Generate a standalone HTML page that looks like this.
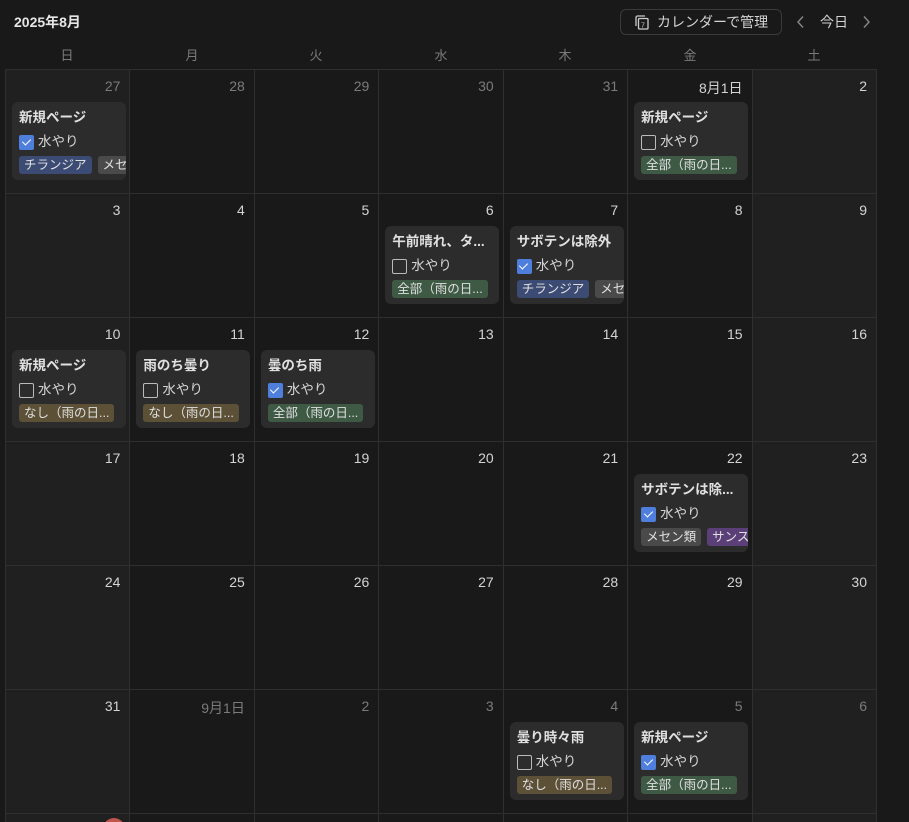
<!DOCTYPE html>
<html><head><meta charset="utf-8"><style>
*{box-sizing:border-box;margin:0;padding:0}
html,body{width:909px;height:822px;overflow:hidden}
body{background:#191919;font-family:"Liberation Sans","Noto Sans CJK JP",sans-serif;color:#d4d4d4;position:relative}
.title{position:absolute;left:14px;top:12px;font-size:14px;font-weight:bold;color:#e6e6e6}
.btn{position:absolute;left:620px;top:9px;width:162px;height:26px;border:1px solid #3a3a3a;border-radius:6px;font-size:14px;color:#d4d4d4;line-height:24px;padding-left:36px}
.nav{position:absolute;top:12px;font-size:14px;color:#d4d4d4}
.dn{position:absolute;top:45px;font-size:13px;color:#7a7a7a;width:124px;text-align:center}
.wrap{position:absolute;left:5px;top:69px;width:872px;height:753px;overflow:hidden}
.grid{width:872px;display:grid;grid-template-columns:repeat(7,1fr);grid-auto-rows:124px;border-left:1px solid #2f2f2f;border-top:1px solid #2f2f2f}
.c{position:relative;border-right:1px solid #2f2f2f;border-bottom:1px solid #2f2f2f}
.w{background:#202020}
.d{position:absolute;right:9px;top:8px;font-size:14px;color:#d4d4d4}
.o{color:#7b7b7b}
.card{position:absolute;left:6px;top:32px;width:114px;height:78px;background:#2c2c2c;border-radius:6px;overflow:hidden}
.t{position:absolute;left:7px;top:4px;font-size:13.5px;font-weight:bold;color:#e0e0e0;white-space:nowrap}
.cb{position:absolute;left:7px;top:32px;font-size:13.5px;color:#d4d4d4;padding-left:19px;line-height:16px;white-space:nowrap}
.cb:before{content:"";position:absolute;left:0;top:1px;width:13px;height:13px;border:1.5px solid #bbb;border-radius:2px}
.cb.k:before{background:#4f7fdc;border-color:#4f7fdc}
.cb.k:after{content:"";position:absolute;left:4.5px;top:3px;width:4px;height:7px;border:solid #fff;border-width:0 1.5px 1.5px 0;transform:rotate(45deg)}
.tags{position:absolute;left:7px;top:54px;white-space:nowrap;font-size:12.5px}
.tg{display:inline-block;height:18px;line-height:18px;padding:0 5px;border-radius:3px;margin-right:6px;color:#e0e0e0;vertical-align:top}
.b{background:#3b4b73}.g{background:#4a4a4a}.gr{background:#3e5a45}.y{background:#5c5037}.p{background:#5b3f78}
</style></head><body>
<div class="title">2025年8月</div>
<div class="btn"><svg style="position:absolute;left:14px;top:5px" width="14" height="15" viewBox="0 0 14 15"><path d="M1 11V2.5A1.5 1.5 0 0 1 2.5 1H10" fill="none" stroke="#ccc" stroke-width="1.3"/><rect x="3.5" y="3.5" width="9.5" height="10.5" rx="1" fill="none" stroke="#ccc" stroke-width="1.3"/><text x="6" y="12.5" font-size="7" fill="#ccc" font-family="Liberation Sans">7</text></svg>カレンダーで管理</div>
<svg class="nav" style="left:796px;top:15px" width="10" height="14" viewBox="0 0 10 14"><path d="M7 1.5L2 7l5 5.5" fill="none" stroke="#888" stroke-width="1.4"/></svg>
<div class="nav" style="left:820px">今日</div>
<svg class="nav" style="left:861px;top:15px" width="10" height="14" viewBox="0 0 10 14"><path d="M3 1.5L8 7l-5 5.5" fill="none" stroke="#888" stroke-width="1.4"/></svg>
<div class="dn" style="left:5px">日</div><div class="dn" style="left:130px">月</div><div class="dn" style="left:254px">火</div><div class="dn" style="left:379px">水</div><div class="dn" style="left:503px">木</div><div class="dn" style="left:628px">金</div><div class="dn" style="left:752px">土</div>
<div class="wrap"><div class="grid">
<div class="c w"><span class="d o">27</span><div class="card"><div class="t">新規ページ</div><div class="cb k">水やり</div><div class="tags"><span class="tg b">チランジア</span><span class="tg g">メセン類</span></div></div></div>
<div class="c"><span class="d o">28</span></div>
<div class="c"><span class="d o">29</span></div>
<div class="c"><span class="d o">30</span></div>
<div class="c"><span class="d o">31</span></div>
<div class="c"><span class="d">8月1日</span><div class="card"><div class="t">新規ページ</div><div class="cb">水やり</div><div class="tags"><span class="tg gr">全部（雨の日...</span></div></div></div>
<div class="c w"><span class="d">2</span></div>

<div class="c w"><span class="d">3</span></div>
<div class="c"><span class="d">4</span></div>
<div class="c"><span class="d">5</span></div>
<div class="c"><span class="d">6</span><div class="card"><div class="t">午前晴れ、タ...</div><div class="cb">水やり</div><div class="tags"><span class="tg gr">全部（雨の日...</span></div></div></div>
<div class="c"><span class="d">7</span><div class="card"><div class="t">サボテンは除外</div><div class="cb k">水やり</div><div class="tags"><span class="tg b">チランジア</span><span class="tg g">メセン類</span></div></div></div>
<div class="c"><span class="d">8</span></div>
<div class="c w"><span class="d">9</span></div>

<div class="c w"><span class="d">10</span><div class="card"><div class="t">新規ページ</div><div class="cb">水やり</div><div class="tags"><span class="tg y">なし（雨の日...</span></div></div></div>
<div class="c"><span class="d">11</span><div class="card"><div class="t">雨のち曇り</div><div class="cb">水やり</div><div class="tags"><span class="tg y">なし（雨の日...</span></div></div></div>
<div class="c"><span class="d">12</span><div class="card"><div class="t">曇のち雨</div><div class="cb k">水やり</div><div class="tags"><span class="tg gr">全部（雨の日...</span></div></div></div>
<div class="c"><span class="d">13</span></div>
<div class="c"><span class="d">14</span></div>
<div class="c"><span class="d">15</span></div>
<div class="c w"><span class="d">16</span></div>

<div class="c w"><span class="d">17</span></div>
<div class="c"><span class="d">18</span></div>
<div class="c"><span class="d">19</span></div>
<div class="c"><span class="d">20</span></div>
<div class="c"><span class="d">21</span></div>
<div class="c"><span class="d">22</span><div class="card"><div class="t">サボテンは除...</div><div class="cb k">水やり</div><div class="tags"><span class="tg g">メセン類</span><span class="tg p">サンスベリア</span></div></div></div>
<div class="c w"><span class="d">23</span></div>

<div class="c w"><span class="d">24</span></div>
<div class="c"><span class="d">25</span></div>
<div class="c"><span class="d">26</span></div>
<div class="c"><span class="d">27</span></div>
<div class="c"><span class="d">28</span></div>
<div class="c"><span class="d">29</span></div>
<div class="c w"><span class="d">30</span></div>

<div class="c w"><span class="d">31</span></div>
<div class="c"><span class="d o">9月1日</span></div>
<div class="c"><span class="d o">2</span></div>
<div class="c"><span class="d o">3</span></div>
<div class="c"><span class="d o">4</span><div class="card"><div class="t">曇り時々雨</div><div class="cb">水やり</div><div class="tags"><span class="tg y">なし（雨の日...</span></div></div></div>
<div class="c"><span class="d o">5</span><div class="card"><div class="t">新規ページ</div><div class="cb k">水やり</div><div class="tags"><span class="tg gr">全部（雨の日...</span></div></div></div>
<div class="c w"><span class="d o">6</span></div>

<div class="c w"><div style="position:absolute;left:97px;top:4px;width:22px;height:22px;border-radius:50%;background:#c0554d"></div></div>
<div class="c"></div><div class="c"></div><div class="c"></div><div class="c"></div><div class="c"></div><div class="c w"></div>
</div></div>
</body></html>
